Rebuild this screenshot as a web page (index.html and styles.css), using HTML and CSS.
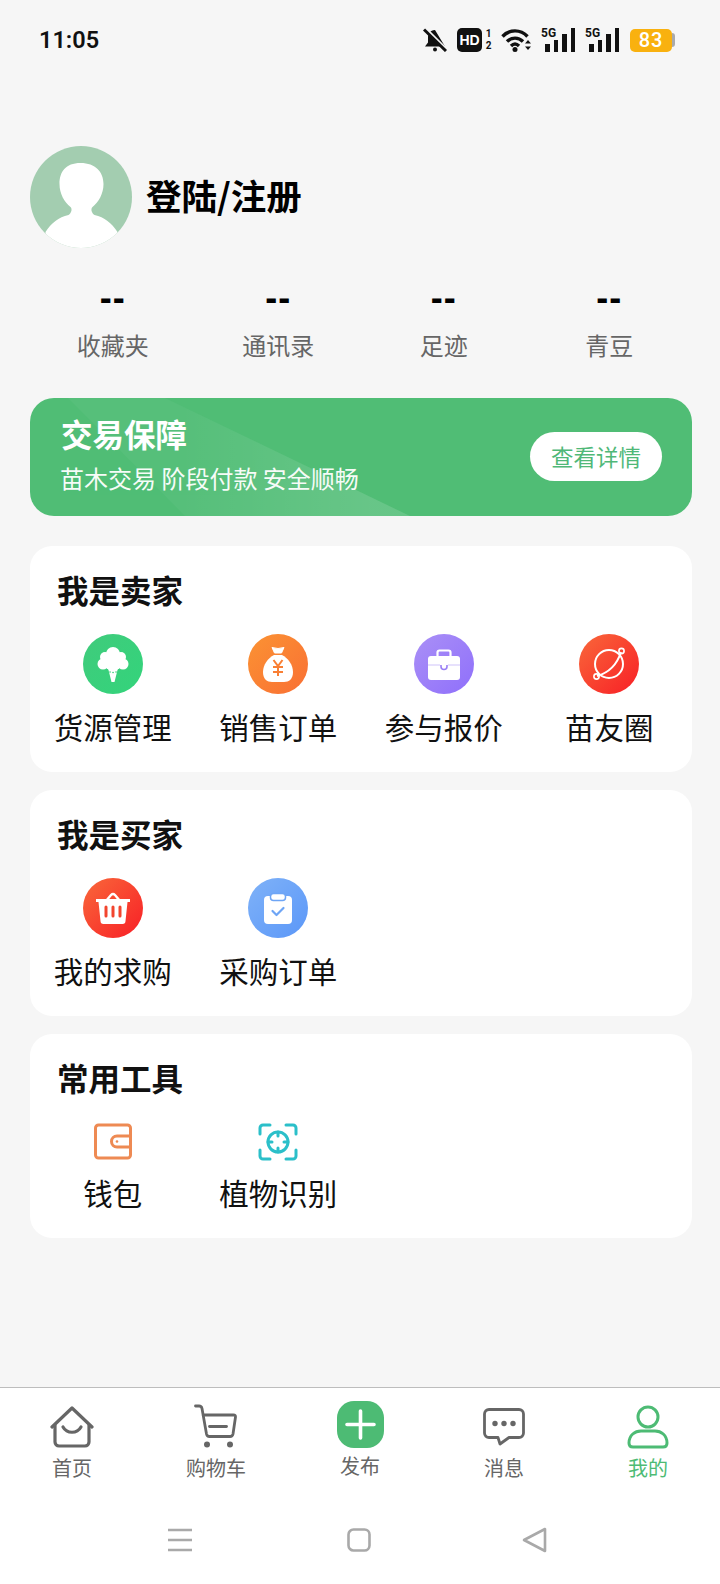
FILE: index.html
```html
<!DOCTYPE html>
<html lang="zh">
<head>
<meta charset="utf-8">
<title>我的</title>
<link rel="stylesheet" href="styles.css">
</head>
<body>
<div class="page">
  <header class="status">
    <span class="time">11:05</span>
    <div class="status-icons">
      <svg class="s-bell" viewBox="0 0 24 24" width="24" height="24"><path d="M12 2c-5 0-7 3.800-7 7.500v5l-3 4h20z" fill="#111"/><circle cx="12" cy="21.500" r="2" fill="#111"/><path d="M3.500 1.500l19 19" stroke="#f6f6f6" stroke-width="3"/><path d="M1 1.500l22 21.500" stroke="#111" stroke-width="3"/></svg>
      <span class="hd"><span class="hd-box">HD</span><span class="hd-nums"><span>1</span><span>2</span></span></span>
      <svg class="s-wifi" viewBox="0 0 30 24" width="30" height="24"><g fill="none" stroke="#111" stroke-width="3.400"><path d="M1.500 8.500c7-7.500 18-7.500 25 0"/><path d="M6 13.500c4.500-4.500 11.500-4.500 16 0"/><path d="M10 18c2.500-2.500 5.500-2.500 8 0"/></g><circle cx="14" cy="21.500" r="2.500" fill="#111"/><path d="M24 15.500l3-3.500 3 3.500zM24 18.500h6l-3 3.500z" fill="#111"/></svg>
      <span class="sig"><span class="sig-5g">5G</span><span class="bar b1"></span><span class="bar b2"></span><span class="bar b3"></span><span class="bar b4"></span></span>
      <span class="sig"><span class="sig-5g">5G</span><span class="bar b1"></span><span class="bar b2"></span><span class="bar b3"></span><span class="bar b4"></span></span>
      <span class="battery"><span class="batt-fill">83</span><span class="batt-cap"></span></span>
    </div>
  </header>

  <section class="profile">
    <svg class="avatar" viewBox="0 0 102 102" width="102" height="102"><defs><clipPath id="av"><circle cx="51" cy="51" r="51"/></clipPath></defs><g clip-path="url(#av)"><rect width="102" height="102" fill="#a3cdb0"/><path d="M50.500 17c-15 0-21 9-21 21 0 10 5 18 11 23 2 2 1 6-2 8-10 2-17 8-23 17v16h72V86c-6-9-13-15-23-17-3-2-4-6-2-8 6-5 11-13 11-23 0-12-8-21-23-21z" fill="#fff"/></g></svg>
    <h1 class="login">登陆/注册</h1>
  </section>

  <section class="stats">
    <div class="stat"><div class="stat-num">--</div><div class="stat-label">收藏夹</div></div>
    <div class="stat"><div class="stat-num">--</div><div class="stat-label">通讯录</div></div>
    <div class="stat"><div class="stat-num">--</div><div class="stat-label">足迹</div></div>
    <div class="stat"><div class="stat-num">--</div><div class="stat-label">青豆</div></div>
  </section>

  <section class="banner">
    <div class="banner-text">
      <div class="banner-title">交易保障</div>
      <div class="banner-sub">苗木交易 阶段付款 安全顺畅</div>
    </div>
    <div class="banner-btn">查看详情</div>
  </section>

  <section class="card">
    <h2 class="card-title">我是卖家</h2>
    <div class="grid">
      <div class="item">
        <span class="ic ic-green"><svg viewBox="0 0 60 60" width="60" height="60"><g fill="#fff"><circle cx="30" cy="20" r="7"/><circle cx="22" cy="23" r="5"/><circle cx="38" cy="23" r="5"/><circle cx="20" cy="30" r="5.500"/><circle cx="40" cy="30" r="5.500"/><circle cx="30" cy="28" r="9"/><path d="M25 34h10l-3.500 14h-3z"/></g><path d="M27 38h.1M30 38.500h.1M33 38h.1" stroke="#3bd07a" stroke-width="1.600" stroke-linecap="round"/></svg></span>
        <span class="item-label">货源管理</span>
      </div>
      <div class="item">
        <span class="ic ic-orange"><svg viewBox="0 0 60 60" width="60" height="60"><path d="M24 13.500q6 2 12 0l-2.500 5.500h-7z" fill="#fff" stroke="#fff" stroke-linejoin="round"/><path d="M26 21h8c6 3 11 10 11 17 0 7-4 10-9 10H24c-5 0-9-3-9-10 0-7 5-14 11-17z" fill="#fff"/><path d="M25.500 26l4.500 6 4.500-6M25 33h10M25 38h10M30 32v10" fill="none" stroke="#f97f34" stroke-width="2"/></svg></span>
        <span class="item-label">销售订单</span>
      </div>
      <div class="item">
        <span class="ic ic-purple"><svg viewBox="0 0 60 60" width="60" height="60"><path d="M23.500 22v-3.500a2 2 0 0 1 2-2h9a2 2 0 0 1 2 2V22" fill="none" stroke="#fff" stroke-width="2.200"/><path d="M17 22h26a3 3 0 0 1 3 3v18a3 3 0 0 1-3 3H17a3 3 0 0 1-3-3V25a3 3 0 0 1 3-3z" fill="#fff"/><path d="M14 31h12M34 31h12" stroke="#cfc3fa" stroke-width="1"/><path d="M27 31v1.500a3 3 0 0 0 6 0V31" fill="none" stroke="#9a7ff5" stroke-width="1.600"/></svg></span>
        <span class="item-label">参与报价</span>
      </div>
      <div class="item">
        <span class="ic ic-red"><svg viewBox="0 0 60 60" width="60" height="60"><g fill="none" stroke="#fff" stroke-width="2"><circle cx="30" cy="30" r="14"/><path d="M18 42Q36 37 42 18"/></g><circle cx="42.500" cy="17" r="2.600" fill="none" stroke="#fff" stroke-width="1.600"/><circle cx="17.500" cy="42.500" r="2.600" fill="none" stroke="#fff" stroke-width="1.600"/></svg></span>
        <span class="item-label">苗友圈</span>
      </div>
    </div>
  </section>

  <section class="card">
    <h2 class="card-title">我是买家</h2>
    <div class="grid">
      <div class="item">
        <span class="ic ic-red"><svg viewBox="0 0 60 60" width="60" height="60"><path d="M23 23l5-6q2-2 4 0l5 6" fill="none" stroke="#fff" stroke-width="2.400"/><path d="M13 21h34v3h-2.500l-2 19a3 3 0 0 1-3 3H20.500a3 3 0 0 1-3-3l-2-19H13z" fill="#fff"/><path d="M23 29v9M30 29v9M37 29v9" stroke="#f2452e" stroke-width="3" stroke-linecap="round"/></svg></span>
        <span class="item-label">我的求购</span>
      </div>
      <div class="item">
        <span class="ic ic-blue"><svg viewBox="0 0 60 60" width="60" height="60"><rect x="16" y="18" width="28" height="28" rx="4" fill="#fff"/><rect x="22.500" y="15.500" width="15" height="7" rx="3" fill="#fff" stroke="#6ea5f5" stroke-width="1.500"/><path d="M24.500 33l4 4 7-7" fill="none" stroke="#6ea5f5" stroke-width="2.200" stroke-linecap="round" stroke-linejoin="round"/></svg></span>
        <span class="item-label">采购订单</span>
      </div>
    </div>
  </section>

  <section class="card">
    <h2 class="card-title">常用工具</h2>
    <div class="grid">
      <div class="item item-tool">
        <svg class="tool" viewBox="0 0 38 38" width="38" height="38"><path d="M36.500 13V5a3 3 0 0 0-3-3H4.500a3 3 0 0 0-3 3v27a3 3 0 0 0 3 3h29a3 3 0 0 0 3-3v-8" fill="none" stroke="#ee8a53" stroke-width="3" stroke-linejoin="round"/><path d="M36.500 13H23a5.500 5.500 0 0 0 0 11h13.500z" fill="none" stroke="#ee8a53" stroke-width="3"/><circle cx="23" cy="18.500" r="1.300" fill="#ee8a53"/></svg>
        <span class="item-label">钱包</span>
      </div>
      <div class="item item-tool">
        <svg class="tool" viewBox="0 0 40 38" width="40" height="38"><g fill="none" stroke="#2bbfc9" stroke-width="3" stroke-linecap="round"><path d="M2 11V5a3 3 0 0 1 3-3h7M28 2h7a3 3 0 0 1 3 3v6M38 27v6a3 3 0 0 1-3 3h-7M12 36H5a3 3 0 0 1-3-3v-6"/><circle cx="20" cy="19" r="10"/><path d="M20 9v4M20 25v4M10 19h4M26 19h4"/></g></svg>
        <span class="item-label">植物识别</span>
      </div>
    </div>
  </section>

  <div class="spacer"></div>

  <nav class="tabs">
    <div class="tab">
      <span class="tab-icon"><svg viewBox="0 0 44 42" width="44" height="42"><g fill="none" stroke="#666" stroke-width="3.200" stroke-linecap="round" stroke-linejoin="round"><path d="M2 21L22 2l20 19"/><path d="M5 19v17a4 4 0 0 0 4 4h26a4 4 0 0 0 4-4V19"/><path d="M13 21c4 7 14 7 18 0"/></g></svg></span>
      <span class="tab-label">首页</span>
    </div>
    <div class="tab">
      <span class="tab-icon"><svg viewBox="0 0 44 46" width="44" height="46"><g fill="none" stroke="#666" stroke-width="2.800" stroke-linecap="round" stroke-linejoin="round"><path d="M1.500 2h3.500q2.500 0 3 2.500L12.500 30q.5 2.500 3 2.500H36q2.500 0 3-2.500l2.500-17q.3-2-2-2H9"/><path d="M15.500 22.500h17"/></g><circle cx="13" cy="40.500" r="3" fill="#666"/><circle cx="36" cy="40.500" r="3" fill="#666"/></svg></span>
      <span class="tab-label">购物车</span>
    </div>
    <div class="tab">
      <span class="tab-icon tab-icon-top"><span class="publish"><svg viewBox="0 0 47 47" width="47" height="47"><path d="M23.500 10v27M10 23.500h27" stroke="#fff" stroke-width="3.600" stroke-linecap="round"/></svg></span></span>
      <span class="tab-label tab-label-up">发布</span>
    </div>
    <div class="tab">
      <span class="tab-icon"><svg viewBox="0 0 42 38" width="42" height="38"><path d="M6 1.500h30a4.500 4.500 0 0 1 4.500 4.500v19a4.500 4.500 0 0 1-4.500 4.500H26L17 36l-2-6.500H6A4.500 4.500 0 0 1 1.500 25V6A4.500 4.500 0 0 1 6 1.500z" fill="none" stroke="#666" stroke-width="2.800" stroke-linejoin="round"/><circle cx="12" cy="15.500" r="2.700" fill="#666"/><circle cx="21" cy="15.500" r="2.700" fill="#666"/><circle cx="30" cy="15.500" r="2.700" fill="#666"/></svg></span>
      <span class="tab-label">消息</span>
    </div>
    <div class="tab tab-active">
      <span class="tab-icon"><svg viewBox="0 0 44 44" width="44" height="44"><g fill="none" stroke="#4dbb74" stroke-width="3"><circle cx="22" cy="12" r="10"/><path d="M3 38c0-8 6-12 12-12h14c6 0 12 4 12 12q0 4-4 4H7q-4 0-4-4z"/></g></svg></span>
      <span class="tab-label">我的</span>
    </div>
  </nav>

  <footer class="navbar">
    <svg viewBox="0 0 24 26" width="24" height="26"><path d="M0 3h24M0 13h24M0 23h24" stroke="#a9a9a9" stroke-width="2.600"/></svg>
    <svg viewBox="0 0 24 26" width="24" height="26"><rect x="1.500" y="2.500" width="21" height="21" rx="5" fill="none" stroke="#a9a9a9" stroke-width="2.600"/></svg>
    <svg class="nav-back" viewBox="0 0 25 26" width="25" height="26"><path d="M23 2v22L2 13z" fill="none" stroke="#a9a9a9" stroke-width="2.600" stroke-linejoin="round"/></svg>
  </footer>
</div>
</body>
</html>
```

FILE: styles.css
```css
* { box-sizing: border-box; }
html, body { margin: 0; padding: 0; }
body {
  background: #f6f6f6;
  font-family: "Noto Sans CJK SC", "Noto Sans", sans-serif;
  color: #111;
}
.page {
  width: 720px;
  height: 1584px;
  display: flex;
  flex-direction: column;
  overflow: hidden;
}

/* status bar */
.status {
  height: 80px;
  flex: none;
  display: flex;
  align-items: center;
  justify-content: space-between;
  padding: 0 45px 0 39px;
}
.time {
  font-family: Roboto, sans-serif;
  font-size: 23.500px;
  font-weight: 600;
  color: #111;
}
.status-icons { display: flex; align-items: center; gap: 10px; }
.status-icons > svg { display: block; flex: none; }
.hd { display: flex; align-items: center; gap: 4px; }
.hd-box {
  width: 25px;
  height: 24px;
  border-radius: 5px;
  background: #111;
  color: #fff;
  font-family: "Liberation Sans", sans-serif;
  font-size: 14px;
  font-weight: 700;
  line-height: 24px;
  text-align: center;
}
.hd-nums {
  width: 5px;
  display: flex;
  flex-direction: column;
  align-items: center;
  font-family: Roboto, sans-serif;
  font-size: 10px;
  font-weight: 700;
  line-height: 12px;
}
.sig {
  position: relative;
  width: 34px;
  height: 24px;
  display: flex;
  align-items: flex-end;
  justify-content: flex-end;
  gap: 4px;
}
.sig-5g {
  position: absolute;
  left: 0;
  top: -2px;
  font-family: Roboto, sans-serif;
  font-size: 12px;
  font-weight: 700;
  line-height: 14px;
}
.bar { width: 4.500px; background: #111; }
.b1 { height: 8px; }
.b2 { height: 12px; }
.b3 { height: 18px; }
.b4 { height: 24px; }
.battery { display: flex; align-items: center; margin-left: 1px; }
.batt-fill {
  width: 42px;
  height: 23px;
  border-radius: 5px;
  background: #f9b10f;
  color: #fff;
  font-family: Roboto, sans-serif;
  font-size: 20px;
  font-weight: 500;
  line-height: 23px;
  text-align: center;
  letter-spacing: 1px;
}
.batt-cap {
  width: 3px;
  height: 14px;
  background: #aaa;
  border-radius: 0 3px 3px 0;
}

/* profile */
.profile {
  flex: none;
  display: flex;
  align-items: center;
  gap: 14px;
  padding: 66px 30px 0;
}
.avatar { display: block; flex: none; }
.login {
  margin: 0 0 4px;
  font-size: 35.500px;
  font-weight: 700;
  line-height: 50px;
  color: #000;
}

/* stats */
.stats {
  flex: none;
  display: grid;
  grid-template-columns: repeat(4, 165.500px);
  padding: 32px 0 0 30px;
}
.stat { text-align: center; }
.stat-num {
  font-family: "Liberation Sans", sans-serif;
  font-size: 36px;
  font-weight: 700;
  line-height: 36px;
  letter-spacing: 1px;
  color: #000;
}
.stat-label {
  margin-top: 11px;
  font-size: 24px;
  line-height: 36px;
  color: #666;
}

/* banner */
.banner {
  position: relative;
  flex: none;
  height: 118px;
  margin: 35px 28px 0 30px;
  padding: 0 30px;
  border-radius: 24px;
  background: #50bd75;
  display: flex;
  align-items: center;
  justify-content: space-between;
  overflow: hidden;
}
.banner::before {
  content: "";
  position: absolute;
  inset: 0;
  background: #56bf7a;
  clip-path: polygon(38px 0, 135px 0, 380px 118px, 155px 118px);
}
.banner::after {
  content: "";
  position: absolute;
  inset: 0;
  background: linear-gradient(90deg, rgba(255,255,255,0) 150px, rgba(255,255,255,0.1) 340px);
  clip-path: polygon(135px 0, 135px 0, 380px 118px, 155px 118px);
}
.banner-text, .banner-btn { position: relative; z-index: 1; }
.banner-text { margin-bottom: 9px; }
.banner-title {
  font-size: 31.500px;
  font-weight: 700;
  line-height: 44px;
  color: #fff;
  padding-left: 1px;
}
.banner-sub {
  margin-top: 6px;
  font-size: 24px;
  line-height: 34px;
  color: #fff;
  opacity: 0.95;
}
.banner-btn {
  width: 132px;
  height: 49px;
  margin-bottom: 2px;
  border-radius: 25px;
  background: #fff;
  color: #50b878;
  font-size: 22.500px;
  line-height: 49px;
  text-align: center;
}

/* cards */
.card {
  flex: none;
  margin: 18px 28px 0 30px;
  padding: 24px 0 25px;
  border-radius: 22px;
  background: #fff;
}
.banner + .card { margin-top: 30px; }
.card-title {
  margin: 0;
  padding-left: 27px;
  font-size: 31.500px;
  font-weight: 700;
  line-height: 38px;
  color: #111;
}
.grid {
  display: grid;
  grid-template-columns: repeat(4, 165.500px);
  margin-top: 26px;
}
.item {
  display: flex;
  flex-direction: column;
  align-items: center;
  gap: 11px;
}
.item-tool { margin-top: 1px; gap: 10px; }
.item-label {
  font-size: 29.500px;
  line-height: 42px;
  color: #111;
  white-space: nowrap;
}
.ic {
  width: 60px;
  height: 60px;
  border-radius: 50%;
  display: block;
  flex: none;
}
.ic svg, .tool { display: block; flex: none; }
.ic-green { background: linear-gradient(135deg, #40cb7c, #33d47b); }
.ic-orange { background: linear-gradient(135deg, #fb9333, #f96f34); }
.ic-purple { background: linear-gradient(135deg, #aa90f6, #8f6ffb); }
.ic-red { background: linear-gradient(135deg, #f9683a, #f81f26); }
.ic-blue { background: linear-gradient(135deg, #7fb2f8, #5b97f8); }

.spacer { flex: 1; }

/* tab bar */
.tabs {
  flex: none;
  height: 101px;
  display: grid;
  grid-template-columns: repeat(5, 144px);
  padding-top: 12px;
  background: #fff;
  border-top: 1px solid #bdbdbd;
}
.tab {
  display: flex;
  flex-direction: column;
  align-items: center;
}
.tab-icon {
  height: 54px;
  display: flex;
  align-items: center;
  justify-content: center;
}
.tab-icon svg { display: block; }
.tab-icon-top { align-items: flex-end; padding-bottom: 6px; }
.publish {
  display: block;
  width: 47px;
  height: 47px;
  border-radius: 17px;
  background: #4dbb74;
}
.tab-label {
  font-size: 20px;
  line-height: 28px;
  color: #666;
}
.tab-label-up { margin-top: -2px; }
.tab-active .tab-label { color: #4dbb74; }

/* system nav */
.navbar {
  flex: none;
  height: 96px;
  display: flex;
  align-items: flex-start;
  gap: 155px;
  padding: 39px 0 0 168px;
  background: #fff;
}
.navbar svg { display: block; flex: none; }
.navbar .nav-back { margin-left: -4px; }
```
